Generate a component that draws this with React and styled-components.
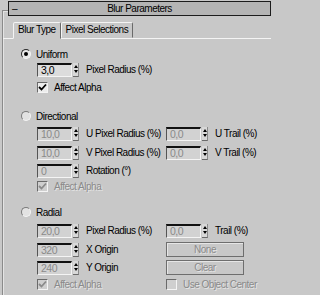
import React from 'react';
import styled, { createGlobalStyle } from 'styled-components';

const Global = createGlobalStyle`
  body {
    margin: 0;
    background: #c8c8c8;
  }
`;

const Page = styled.div`
  width: 277px;
  height: 295px;
  overflow: hidden;
  box-sizing: border-box;
  padding: 10px 0 0 2px;
  background: #c8c8c8;
  font-family: "Liberation Sans", Arial, sans-serif;
  font-size: 10px;
  letter-spacing: -0.5px;
  color: #000;
`;

const Frame = styled.div`
  width: 269px;
  height: 100%;
  box-sizing: border-box;
  border-left: 1px solid #8a8a8a;
  border-top: 1px solid #8a8a8a;
  box-shadow: inset 1px 1px 0 #e4e4e4;
`;

const Header = styled.div`
  margin: -10px 0 0 5px;
  width: 263px;
  height: 15px;
  box-sizing: border-box;
  border: 1px solid #1c1c1c;
  background: #b4b4b4;
  display: grid;
  grid-template-columns: 1fr auto 1fr;
  align-items: center;
  line-height: 13px;
`;

const Dash = styled.span`
  padding-left: 3px;
`;

const Title = styled.span``;

const TabStrip = styled.div`
  margin-top: 6px;
  height: 16px;
  padding-left: 10px;
  display: flex;
  border-bottom: 1px solid #f4f4f4;
`;

const Tab = styled.div`
  box-sizing: border-box;
  padding: 0 4px;
  line-height: 14px;
  border: 1px solid;
  border-color: #f4f4f4 #6a6a6a transparent #f4f4f4;
  border-radius: 2px 2px 0 0;
  background: #c8c8c8;
  margin-bottom: ${(p) => (p.$active ? '-1px' : '0')};
  height: ${(p) => (p.$active ? '17px' : '16px')};
`;

const Panel = styled.div`
  padding-left: 18px;
  display: flex;
  flex-direction: column;
`;

const RadioRow = styled.div`
  margin-top: ${(p) => p.$top}px;
  height: 14px;
  display: flex;
  align-items: center;
  gap: 5px;
`;

const Radio = styled.span`
  width: 10px;
  height: 10px;
  box-sizing: border-box;
  border-radius: 50%;
  border: 1px solid;
  border-color: ${(p) => (p.$on ? '#2a2a2a #f4f4f4 #f4f4f4 #2a2a2a' : '#7a7a7a #f4f4f4 #f4f4f4 #7a7a7a')};
  background: ${(p) => (p.$on ? '#e8e8e8' : '#e2e2e2')};
  display: flex;
  align-items: center;
  justify-content: center;
  &::after {
    content: '';
    width: 4px;
    height: 4px;
    border-radius: 50%;
    background: ${(p) => (p.$on ? '#000' : 'transparent')};
  }
`;

const Row = styled.div`
  margin-top: ${(p) => p.$top}px;
  height: 15px;
  padding-left: 16px;
  display: flex;
  align-items: center;
`;

const Group = styled.div`
  width: 129px;
  display: flex;
  align-items: center;
  flex-shrink: 0;
`;

const Field = styled.div`
  width: 35px;
  height: 14px;
  box-sizing: border-box;
  border-top: 2px solid #111;
  border-left: 1px solid #555;
  border-bottom: 1px solid #f4f4f4;
  border-right: 1px solid #f4f4f4;
  background: ${(p) => (p.$off ? '#d2d2d2' : '#dcdcdc')};
  color: ${(p) => (p.$off ? '#8a8a8a' : '#000')};
  padding-left: 3px;
  line-height: 11px;
  font-size: 10.5px;
`;

const Spinner = styled.div`
  width: 6px;
  height: 14px;
  margin-left: 1px;
  box-sizing: border-box;
  border-bottom: 1px solid #6a6a6a;
  border-right: 1px solid #8a8a8a;
  background: #d8d8d8;
  display: flex;
  flex-direction: column;
  align-items: center;
  justify-content: center;
  gap: 2px;
`;

const Arrow = styled.span`
  width: 0;
  height: 0;
  border-left: 2px solid transparent;
  border-right: 2px solid transparent;
  ${(p) => (p.$up ? 'border-bottom: 3px solid #000;' : 'border-top: 3px solid #000;')}
`;

const Label = styled.span`
  margin-left: ${(p) => p.$gap ?? 7}px;
  white-space: nowrap;
  color: ${(p) => (p.$off ? '#8a8a8a' : '#000')};
  text-shadow: ${(p) => (p.$off ? '1px 1px 0 #e4e4e4' : 'none')};
`;

const CheckRow = styled.div`
  margin-top: ${(p) => p.$top}px;
  height: 13px;
  padding-left: 16px;
  display: flex;
  align-items: center;
`;

const CheckWrap = styled.div`
  display: flex;
  align-items: center;
  width: ${(p) => (p.$wide ? '129px' : 'auto')};
  flex-shrink: 0;
`;

const Box = styled.span`
  width: 11px;
  height: 11px;
  box-sizing: border-box;
  border: 1px solid;
  border-color: #6a6a6a #f4f4f4 #f4f4f4 #6a6a6a;
  background: ${(p) => (p.$off ? '#cfcfcf' : '#ececec')};
  display: flex;
  align-items: center;
  justify-content: center;
`;

const Button = styled.div`
  width: 78px;
  height: 15px;
  box-sizing: border-box;
  border: 1px solid #6e6e6e;
  box-shadow: inset 1px 1px 0 #e6e6e6;
  background: #c8c8c8;
  color: #8a8a8a;
  text-shadow: 1px 1px 0 #e4e4e4;
  display: flex;
  align-items: center;
  justify-content: center;
`;

function Check({ on, off, label, wide }) {
  return (
    <CheckWrap $wide={wide}>
      <Box $off={off}>
        {on && (
          <svg width="9" height="9" viewBox="0 0 9 9">
            <polyline points="1,4 3.5,6.5 8,1.5" fill="none" stroke={off ? '#8a8a8a' : '#000'} strokeWidth="1.8" />
          </svg>
        )}
      </Box>
      <Label $gap={6} $off={off}>{label}</Label>
    </CheckWrap>
  );
}

function Spin({ value, label, off }) {
  return (
    <Group>
      <Field $off={off}>{value}</Field>
      <Spinner>
        <Arrow $up />
        <Arrow />
      </Spinner>
      <Label>{label}</Label>
    </Group>
  );
}

export default function App() {
  return (
    <Page>
      <Global />
      <Frame>
        <Header>
          <Dash>–</Dash>
          <Title>Blur Parameters</Title>
          <span />
        </Header>
        <TabStrip>
          <Tab $active>Blur Type</Tab>
          <Tab>Pixel Selections</Tab>
        </TabStrip>
        <Panel>
          <RadioRow $top={8}>
            <Radio $on />
            <span>Uniform</span>
          </RadioRow>
          <Row $top={1}>
            <Spin value="3,0" label="Pixel Radius (%)" />
          </Row>
          <CheckRow $top={4}>
            <Check on label="Affect Alpha" />
          </CheckRow>

          <RadioRow $top={15}>
            <Radio />
            <span>Directional</span>
          </RadioRow>
          <Row $top={3}>
            <Spin off value="10,0" label="U Pixel Radius (%)" />
            <Spin off value="0,0" label="U Trail (%)" />
          </Row>
          <Row $top={4}>
            <Spin off value="10,0" label="V Pixel Radius (%)" />
            <Spin off value="0,0" label="V Trail (%)" />
          </Row>
          <Row $top={3}>
            <Spin off value="0" label="Rotation (°)" />
          </Row>
          <CheckRow $top={2}>
            <Check on off label="Affect Alpha" />
          </CheckRow>

          <RadioRow $top={12}>
            <Radio />
            <span>Radial</span>
          </RadioRow>
          <Row $top={4}>
            <Spin off value="20,0" label="Pixel Radius (%)" />
            <Spin off value="0,0" label="Trail (%)" />
          </Row>
          <Row $top={4}>
            <Spin off value="320" label="X Origin" />
            <Button>None</Button>
          </Row>
          <Row $top={3}>
            <Spin off value="240" label="Y Origin" />
            <Button>Clear</Button>
          </Row>
          <CheckRow $top={3}>
            <Check on off wide label="Affect Alpha" />
            <Check off label="Use Object Center" />
          </CheckRow>
        </Panel>
      </Frame>
    </Page>
  );
}
